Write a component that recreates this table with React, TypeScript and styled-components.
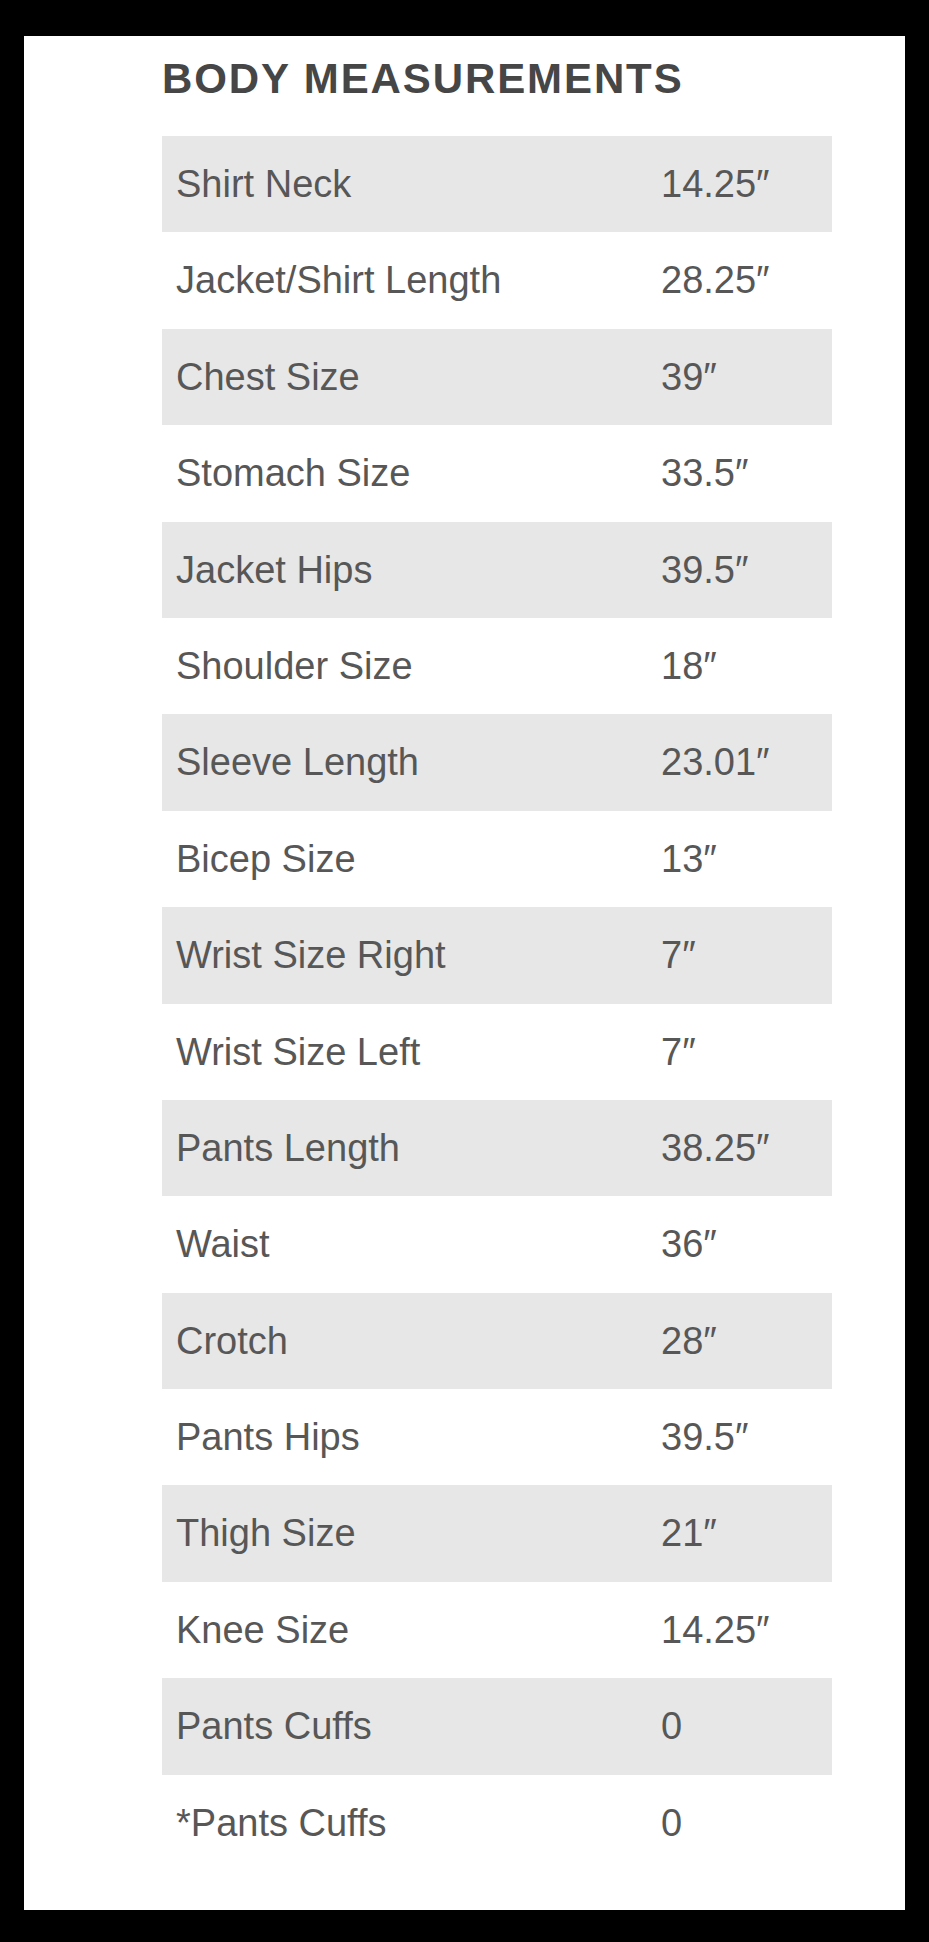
import React from "react";
import styled, { createGlobalStyle } from "styled-components";

const GlobalStyle = createGlobalStyle`
  html, body {
    margin: 0;
    padding: 0;
    background: #000;
  }
`;

const Frame = styled.div`
  padding: 36px 24px 32px 24px;
  background: #000;
`;

const Panel = styled.section`
  background: #fff;
  height: 1874px;
  box-sizing: border-box;
  padding: 19px 73px 0 138px;
  font-family: "Liberation Sans", Arial, sans-serif;
`;

const Title = styled.h2`
  margin: 0 0 33px 0;
  font-size: 42px;
  line-height: 48px;
  font-weight: 700;
  letter-spacing: 1.9px;
  color: #464646;
`;

const List = styled.div`
  display: flex;
  flex-direction: column;
`;

const Row = styled.div<{ $shaded: boolean }>`
  display: grid;
  grid-template-columns: 499px 1fr;
  height: 96.4px;
  align-items: center;
  background: ${(p) => (p.$shaded ? "#e7e7e7" : "#fff")};
`;

const Label = styled.span`
  padding-left: 14px;
  font-size: 38px;
  line-height: 96.4px;
  color: #575757;
`;

const Value = styled.span`
  font-size: 38px;
  line-height: 96.4px;
  color: #575757;
`;

const rows: [string, string][] = [
  ["Shirt Neck", "14.25\u2033"],
  ["Jacket/Shirt Length", "28.25\u2033"],
  ["Chest Size", "39\u2033"],
  ["Stomach Size", "33.5\u2033"],
  ["Jacket Hips", "39.5\u2033"],
  ["Shoulder Size", "18\u2033"],
  ["Sleeve Length", "23.01\u2033"],
  ["Bicep Size", "13\u2033"],
  ["Wrist Size Right", "7\u2033"],
  ["Wrist Size Left", "7\u2033"],
  ["Pants Length", "38.25\u2033"],
  ["Waist", "36\u2033"],
  ["Crotch", "28\u2033"],
  ["Pants Hips", "39.5\u2033"],
  ["Thigh Size", "21\u2033"],
  ["Knee Size", "14.25\u2033"],
  ["Pants Cuffs", "0"],
  ["*Pants Cuffs", "0"],
];

export default function App() {
  return (
    <>
      <GlobalStyle />
      <Frame>
        <Panel>
          <Title>BODY MEASUREMENTS</Title>
          <List>
            {rows.map(([label, value], i) => (
              <Row key={label} $shaded={i % 2 === 0}>
                <Label>{label}</Label>
                <Value>{value}</Value>
              </Row>
            ))}
          </List>
        </Panel>
      </Frame>
    </>
  );
}
